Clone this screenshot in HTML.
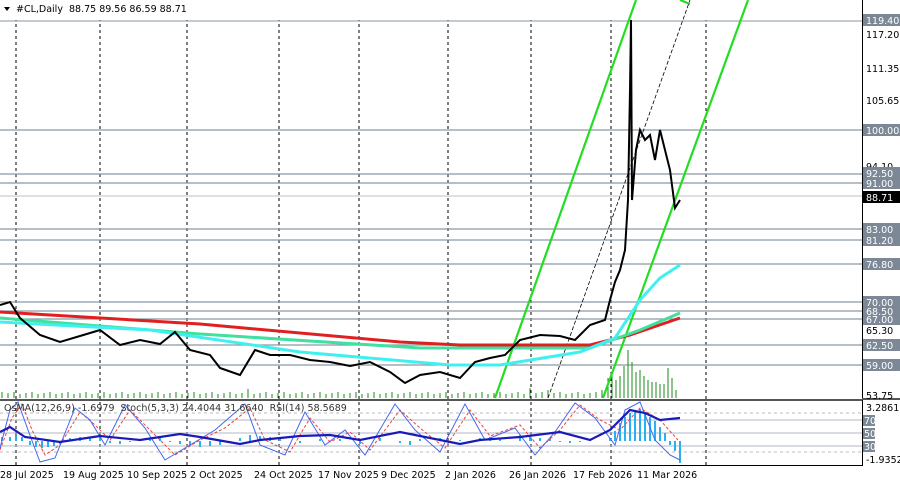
<!DOCTYPE html>
<html><head><meta charset="utf-8"><style>
html,body{margin:0;padding:0;background:#fff;width:900px;height:486px;overflow:hidden}
svg{display:block;font-family:"DejaVu Sans","Liberation Sans",sans-serif}
.ax{font-size:9.5px;fill:#000}
.lb{font-size:9.5px;fill:#fff}
.dt{font-size:9.5px;fill:#000}
</style></head><body>
<svg width="900" height="486" viewBox="0 0 900 486">
<rect width="900" height="486" fill="#fff"/>
<!-- vertical dashed grid -->
<g stroke="#000" stroke-dasharray="3,3" stroke-width="1">
<line x1="16" y1="0" x2="16" y2="465"/><line x1="100" y1="0" x2="100" y2="465"/>
<line x1="187" y1="0" x2="187" y2="465"/><line x1="279" y1="0" x2="279" y2="465"/>
<line x1="359" y1="0" x2="359" y2="465"/><line x1="448" y1="0" x2="448" y2="465"/>
<line x1="531" y1="0" x2="531" y2="465"/><line x1="611" y1="0" x2="611" y2="465"/>
<line x1="706" y1="0" x2="706" y2="465"/>
</g>
<!-- header -->
<rect x="0" y="0" width="862" height="20" fill="#fff"/>
<line x1="0" y1="21" x2="862" y2="21" stroke="#8a96a4"/>
<path d="M4 7 L10 7 L7 11 Z" fill="#000"/>
<text x="16" y="12" style="font-size:9.5px" fill="#000">#CL,Daily&#160; 88.75 89.56 86.59 88.71</text>
<!-- horizontal levels -->
<g stroke="#8a96a4" stroke-width="1.3">
<line x1="0" y1="130" x2="862" y2="130"/><line x1="0" y1="174" x2="862" y2="174"/>
<line x1="0" y1="183" x2="862" y2="183"/><line x1="0" y1="229" x2="862" y2="229"/>
<line x1="0" y1="240" x2="862" y2="240"/><line x1="0" y1="264" x2="862" y2="264"/>
<line x1="0" y1="302" x2="862" y2="302"/><line x1="0" y1="311" x2="862" y2="311"/>
<line x1="0" y1="319" x2="862" y2="319"/><line x1="0" y1="345" x2="862" y2="345"/>
<line x1="0" y1="365" x2="862" y2="365"/>
</g>
<line x1="0" y1="196" x2="862" y2="196" stroke="#c0c0c0"/>
<!-- volume bars -->
<g stroke="#1a8a1a" stroke-width="1">
<path d="M2 398v-6M8 398v-5M14 398v-6M20 398v-4M26 398v-5M32 398v-6M38 398v-4M44 398v-5M50 398v-6M56 398v-4M62 398v-5M68 398v-6M74 398v-4M80 398v-5M86 398v-6M92 398v-4M98 398v-5M104 398v-6M110 398v-4M116 398v-5M122 398v-6M128 398v-4M134 398v-5M140 398v-6M146 398v-4M152 398v-5M158 398v-6M164 398v-4M170 398v-5M176 398v-6M182 398v-4M188 398v-5M194 398v-6M200 398v-4M206 398v-5M212 398v-6M218 398v-4M224 398v-5M230 398v-6M236 398v-4M242 398v-5M248 398v-9M254 398v-4M260 398v-5M266 398v-6M272 398v-4M278 398v-5M284 398v-6M290 398v-4M296 398v-5M302 398v-6M308 398v-4M314 398v-5M320 398v-6M326 398v-4M332 398v-5M338 398v-6M344 398v-4M350 398v-5M356 398v-6M362 398v-4M368 398v-5M374 398v-6M380 398v-4M386 398v-5M392 398v-6M398 398v-4M404 398v-5M410 398v-6M416 398v-4M422 398v-5M428 398v-6M434 398v-4M440 398v-5M446 398v-6M452 398v-4M458 398v-5M464 398v-6M470 398v-4M476 398v-5M482 398v-6M488 398v-4M494 398v-5M500 398v-6M506 398v-4M512 398v-5M518 398v-6M524 398v-4M530 398v-10M536 398v-5M542 398v-6M548 398v-8M554 398v-5M560 398v-6M566 398v-4M572 398v-5M578 398v-6M584 398v-4M590 398v-5M596 398v-6M602 398v-8M608 398v-20M612 398v-26M616 398v-18M620 398v-22M624 398v-32M628 398v-48M632 398v-36M636 398v-26M640 398v-28M644 398v-22M648 398v-18M652 398v-16M656 398v-16M660 398v-14M664 398v-14M668 398v-30M672 398v-20M676 398v-8"/>
</g>
<!-- channels -->
<g stroke="#22dd22" stroke-width="2.2">
<line x1="495" y1="398" x2="636" y2="0"/>
<line x1="603" y1="398" x2="748" y2="0"/>
<line x1="680" y1="0" x2="690" y2="4"/>
</g>
<line x1="548" y1="398" x2="690" y2="0" stroke="#000" stroke-dasharray="4,2" stroke-width="0.8"/>
<!-- MAs -->
<polyline fill="none" stroke="#e02020" stroke-width="3" points="0,312 200,324 400,342 460,345 590,345 630,335 680,318"/>
<polyline fill="none" stroke="#40e0a0" stroke-width="3" points="0,318 200,334 420,348 590,348 640,330 680,313"/>
<polyline fill="none" stroke="#40f0f0" stroke-width="3" points="0,322 150,330 300,352 450,365 500,365 580,352 615,338 640,300 660,278 680,265"/>
<!-- price -->
<polyline fill="none" stroke="#000" stroke-width="2" points="0,305 10,302 20,318 40,335 60,342 80,336 100,330 120,345 140,340 160,344 175,332 190,350 210,355 220,368 240,375 255,350 270,355 290,355 310,360 330,362 350,366 370,362 390,372 405,383 420,375 440,372 460,378 475,362 490,358 505,355 520,340 540,335 560,336 575,340 590,325 605,320 610,300 615,282 620,270 625,250 628,200 630,90 631,20 632,200 636,150 640,130 645,140 650,135 655,160 660,130 665,150 670,170 675,208 680,200"/>
<!-- indicator panel -->
<rect x="0" y="399" width="862" height="2" fill="#555"/>
<g stroke="#b0b8c4" stroke-width="1">
<line x1="0" y1="420" x2="862" y2="420"/><line x1="0" y1="433" x2="862" y2="433"/><line x1="0" y1="446" x2="862" y2="446"/>
</g>
<g stroke="#bbb" stroke-dasharray="3,3"><line x1="0" y1="413" x2="862" y2="413"/><line x1="0" y1="452" x2="862" y2="452"/></g>
<g stroke="#2ab0f0" stroke-width="2">
<path d="M2 441v-4M10 441v-4M16 441v-6M22 441v-4M30 441v4M36 441v6M42 441v7M48 441v6M54 441v5M60 441v3M70 441v-3M80 441v-4M90 441v-3M100 441v-4M110 441v2M120 441v3M130 441v1M150 441v-3M160 441v-3M170 441v1M180 441v3M190 441v5M200 441v6M210 441v5M220 441v4M230 441v2M240 441v-3M250 441v-6M260 441v-5M270 441v-4M280 441v-3M300 441v2M320 441v-2M340 441v-2M360 441v3M380 441v-3M400 441v2M410 441v4M420 441v-2M440 441v-3M460 441v-1M480 441v-3M490 441v-4M500 441v-3M520 441v-6M530 441v-5M540 441v-3M550 441v-2M560 441v1M570 441v2M580 441v1M590 441v-1M610 441v-3M615 441v-10M620 441v-18M625 441v-24M630 441v-28M635 441v-30M640 441v-32M645 441v-28M650 441v-24M655 441v-20M660 441v-14M665 441v-8M670 441v4M675 441v10M680 441v22"/>
</g>
<polyline fill="none" stroke="#f04040" stroke-width="1" stroke-dasharray="3,2" points="0,450 12,418 22,404 32,430 45,455 60,445 80,412 95,425 110,440 130,410 150,430 175,455 200,440 225,428 250,408 265,440 290,452 310,418 330,442 350,432 370,450 400,410 420,428 445,448 470,410 490,436 520,425 540,448 560,430 580,405 600,420 620,430 640,408 660,420 678,440"/>
<polyline fill="none" stroke="#4466ee" stroke-width="1" points="0,448 10,410 18,402 28,430 40,462 55,458 75,408 90,420 105,445 125,405 145,428 165,460 190,445 215,430 245,404 260,445 285,455 305,412 325,445 345,430 365,455 395,404 415,430 440,452 465,404 485,440 515,428 535,455 555,432 575,403 595,418 615,445 625,410 640,402 655,440 670,455 680,460"/>
<polyline fill="none" stroke="#1a1ab8" stroke-width="2.2" points="0,432 10,427 25,437 60,442 100,436 140,440 180,434 200,437 240,444 260,440 300,436 330,435 360,440 400,432 430,438 460,444 480,440 520,437 560,432 590,440 610,430 630,410 645,413 660,420 680,418"/>
<text x="4" y="411" style="font-size:9.5px" fill="#333">OsMA(12,26,9) -1.6979&#160; Stoch(5,3,3) 24.4044 31.6640&#160; RSI(14) 58.5689</text>
<rect x="0" y="465" width="862" height="1" fill="#000"/>
<!-- dates -->
<g class="dt">
<text x="0" y="478" class="dt">28 Jul 2025</text><text x="63" y="478" class="dt">19 Aug 2025</text>
<text x="127" y="478" class="dt">10 Sep 2025</text><text x="190" y="478" class="dt">2 Oct 2025</text>
<text x="254" y="478" class="dt">24 Oct 2025</text><text x="318" y="478" class="dt">17 Nov 2025</text>
<text x="381" y="478" class="dt">9 Dec 2025</text><text x="445" y="478" class="dt">2 Jan 2026</text>
<text x="509" y="478" class="dt">26 Jan 2026</text><text x="573" y="478" class="dt">17 Feb 2026</text>
<text x="637" y="478" class="dt">11 Mar 2026</text>
</g>
<!-- right axis -->
<rect x="862" y="0" width="1" height="466" fill="#000"/>
<rect x="862" y="398" width="38" height="2" fill="#555"/>
<g class="ax">
<text x="866" y="38" class="ax">117.20</text><text x="866" y="72" class="ax">111.35</text>
<text x="866" y="104" class="ax">105.65</text><text x="866" y="170" class="ax">94.10</text>
<text x="866" y="334" class="ax">65.30</text><text x="866" y="399" class="ax">53.75</text>
<text x="866" y="411" class="ax">3.2861</text><text x="866" y="463" class="ax">-1.9352</text>
</g>
<g fill="#7c8896">
<rect x="863" y="14" width="37" height="12"/><rect x="863" y="124" width="37" height="12"/>
<rect x="863" y="167" width="37" height="12"/><rect x="863" y="177" width="37" height="12"/>
<rect x="863" y="223" width="37" height="12"/><rect x="863" y="234" width="37" height="12"/>
<rect x="863" y="258" width="37" height="12"/><rect x="863" y="296" width="37" height="12"/>
<rect x="863" y="305" width="37" height="12"/><rect x="863" y="313" width="37" height="12"/>
<rect x="863" y="339" width="37" height="12"/><rect x="863" y="359" width="37" height="12"/>
<rect x="863" y="415" width="12" height="11"/><rect x="863" y="428" width="12" height="11"/><rect x="863" y="441" width="12" height="11"/>
</g>
<rect x="863" y="191" width="37" height="12" fill="#000"/>
<g class="lb">
<text x="866" y="24" class="lb">119.40</text><text x="866" y="134" class="lb">100.00</text>
<text x="866" y="177" class="lb">92.50</text><text x="866" y="187" class="lb">91.00</text>
<text x="866" y="201" class="lb">88.71</text><text x="866" y="233" class="lb">83.00</text>
<text x="866" y="244" class="lb">81.20</text><text x="866" y="268" class="lb">76.80</text>
<text x="866" y="306" class="lb">70.00</text><text x="866" y="315" class="lb">68.50</text>
<text x="866" y="323" class="lb">67.00</text><text x="866" y="349" class="lb">62.50</text>
<text x="866" y="369" class="lb">59.00</text>
<text x="864" y="424" class="lb">70</text><text x="864" y="437" class="lb">50</text><text x="864" y="450" class="lb">30</text>
</g>
</svg>
</body></html>
